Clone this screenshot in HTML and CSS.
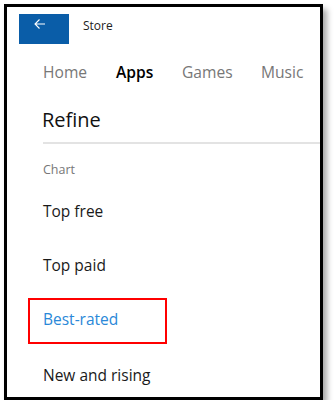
FILE: index.html
```html
<!DOCTYPE html>
<html lang="en">
<head>
<meta charset="utf-8">
<title>Store</title>
<link rel="stylesheet" href="styles.css">
</head>
<body>
<div class="frame">
  <header class="titlebar">
    <button class="back" aria-label="Back">
      <svg width="12" height="12" viewBox="0 0 12 12" aria-hidden="true">
        <path d="M1 6 H11 M5.5 1.5 L1 6 L5.5 10.5" fill="none" stroke="#fff" stroke-width="1.1"/>
      </svg>
    </button>
    <span class="app-title">Store</span>
  </header>
  <nav class="tabs">
    <span class="tab">Home</span>
    <span class="tab active">Apps</span>
    <span class="tab">Games</span>
    <span class="tab">Music</span>
  </nav>
  <h1 class="heading">Refine</h1>
  <div class="divider"></div>
  <div class="section-label">Chart</div>
  <ul class="chart-list">
    <li class="chart-item">Top free</li>
    <li class="chart-item">Top paid</li>
    <li class="chart-item selected"><span class="highlight">Best-rated</span></li>
    <li class="chart-item">New and rising</li>
  </ul>
</div>
</body>
</html>
```
FILE: styles.css
```css
html, body {
  margin: 0;
  padding: 0;
  background: #fff;
}
body {
  font-family: "Open Sans", "Noto Sans", sans-serif;
  color: #1a1a1a;
}
.frame {
  margin: 4px 0 0 4px;
  width: 313px;
  height: 390px;
  border: 3px solid #000;
  background: #fff;
  box-shadow: 4px 5px 6px rgba(0, 0, 0, 0.35);
  overflow: hidden;
}
.titlebar {
  display: flex;
  align-items: flex-start;
  padding: 7px 0 0 12px;
  height: 30px;
}
.back {
  width: 50px;
  height: 30px;
  border: 0;
  padding: 4px 0 0 15px;
  margin: 0;
  background: #0a5da8;
  display: flex;
  align-items: flex-start;
}
.back svg {
  display: block;
}
.app-title {
  margin: 4px 0 0 14px;
  font-size: 12px;
  line-height: 16px;
  color: #222;
}
.tabs {
  display: grid;
  grid-template-columns: 73px 66px 79px auto;
  padding: 18px 0 0 36px;
  font-size: 15.6px;
  line-height: 20px;
  color: #777;
}
.tab.active {
  color: #000;
  font-weight: 600;
}
.heading {
  margin: 0;
  padding: 24px 0 0 35px;
  font-size: 20px;
  font-weight: 400;
  line-height: 28px;
  color: #111;
}
.divider {
  margin: 8px 0 0 36px;
  height: 2px;
  background: #e3e3e3;
}
.section-label {
  padding: 17px 0 0 36px;
  font-size: 12.5px;
  line-height: 18px;
  color: #777;
}
.chart-list {
  list-style: none;
  margin: 0;
  padding: 21px 0 0 36px;
}
.chart-item {
  font-size: 15.5px;
  line-height: 22px;
  height: 54px;
  color: #1a1a1a;
}
.chart-item.selected {
  margin: -10px 0 0 -15px;
  height: 66px;
}
.highlight {
  display: block;
  box-sizing: border-box;
  width: 139px;
  height: 46px;
  padding: 8px 0 0 13px;
  border: 2px solid #f00;
  color: #2a88d8;
}
```
